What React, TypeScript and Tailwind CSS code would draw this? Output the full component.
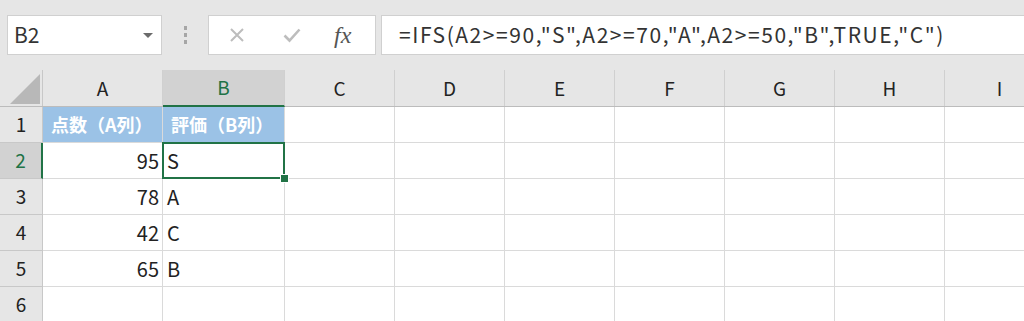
import React from 'react';

const COLS = ['A', 'B', 'C', 'D', 'E', 'F', 'G', 'H', 'I'];
const COL_W = ['w-[120px]', 'w-[122px]', 'w-[110px]', 'w-[110px]', 'w-[110px]', 'w-[110px]', 'w-[110px]', 'w-[110px]', 'w-[110px]'];

const rows: { n: number; a: string; b: string }[] = [
  { n: 1, a: '点数（A列）', b: '評価（B列）' },
  { n: 2, a: '95', b: 'S' },
  { n: 3, a: '78', b: 'A' },
  { n: 4, a: '42', b: 'C' },
  { n: 5, a: '65', b: 'B' },
  { n: 6, a: '', b: '' },
];

const font = "font-['Noto_Sans_CJK_JP',sans-serif]";

const FormulaBar: React.FC = () => (
  <div className="h-[70px] flex items-start pt-[15px] pl-[7px]">
    <div className="w-[155px] h-[40px] bg-white border border-[#d0d0d0] flex items-center justify-between pl-[6px] pr-[8px]">
      <span className="text-[21px] text-[#333]">B2</span>
      <span className="w-0 h-0 border-l-[5px] border-r-[5px] border-t-[5px] border-l-transparent border-r-transparent border-t-[#6b6b6b]" />
    </div>
    <div className="w-[46px] h-[40px] flex flex-col items-center justify-center gap-[3px]">
      <span className="w-[3px] h-[4px] bg-[#a6a6a6]" />
      <span className="w-[3px] h-[4px] bg-[#a6a6a6]" />
      <span className="w-[3px] h-[4px] bg-[#a6a6a6]" />
    </div>
    <div className="w-[168px] h-[40px] bg-white border border-[#d0d0d0] flex items-center">
      <svg className="ml-[20px]" width="16" height="16" viewBox="0 0 16 16">
        <path d="M2 2 L14 14 M14 2 L2 14" stroke="#bdbdbd" strokeWidth="2" />
      </svg>
      <svg className="ml-[38px]" width="18" height="16" viewBox="0 0 18 16">
        <path d="M1.5 8.5 L6.5 13.5 L16.5 2.5" stroke="#bdbdbd" strokeWidth="2.6" fill="none" />
      </svg>
      <span className="ml-[33px] text-[24px] italic text-[#555] font-['Liberation_Serif',serif] leading-none">
        fx
      </span>
    </div>
    <div className="ml-[5px] flex-1 h-[40px] bg-white border border-[#d0d0d0] border-r-0 flex items-center pl-[17px]">
      <span className="text-[21px] text-[#333] tracking-[1.55px]">=IFS(A2&gt;=90,"S",A2&gt;=70,"A",A2&gt;=50,"B",TRUE,"C")</span>
    </div>
  </div>
);

const App: React.FC = () => {
  return (
    <div className={`w-[1024px] h-[321px] overflow-hidden bg-[#e6e6e6] ${font}`}>
      <FormulaBar />
      <div className="w-[1060px]">
        {/* column headers */}
        <div className="flex h-[37px] border-b border-[#bcbcbc]">
          <div className="w-[43px] border-r border-[#c8c8c8] flex items-end justify-end pr-[2px] pb-[2px]">
            <div className="w-0 h-0 border-l-[30px] border-t-[30px] border-l-transparent border-t-transparent border-b-0 border-r-[0px] relative">
              <span className="absolute right-0 bottom-0 w-0 h-0 border-l-[30px] border-b-[30px] border-l-transparent border-b-[#b8b8b8]" />
            </div>
          </div>
          {COLS.map((c, i) => (
            <div
              key={c}
              className={`${COL_W[i]} shrink-0 border-r border-[#d0d0d0] flex items-center justify-center text-[19px] ${
                c === 'B' ? 'bg-[#d2d2d2] text-[#217346] border-b-2 border-b-[#217346] -mb-px' : 'text-[#222]'
              }`}
            >
              {c}
            </div>
          ))}
        </div>
        {rows.map((r) => (
          <div key={r.n} className="flex h-[36px]">
            <div
              className={`w-[43px] shrink-0 border-b border-[#c8c8c8] flex items-center justify-center text-[19px] ${
                r.n === 2
                  ? 'bg-[#d2d2d2] text-[#217346] border-r-2 border-r-[#217346]'
                  : 'text-[#222] border-r border-r-[#c8c8c8]'
              }`}
            >
              {r.n}
            </div>
            {COLS.map((c, i) => {
              const header = r.n === 1 && i < 2;
              const text = i === 0 ? r.a : i === 1 ? r.b : '';
              const selected = r.n === 2 && i === 1;
              return (
                <div
                  key={c}
                  className={`${COL_W[i]} shrink-0 relative border-r border-b border-[#dadada] flex items-center ${
                    header
                      ? 'bg-[#9bc2e6] text-white font-bold text-[18px] pl-[8px] border-[#c9dcee]'
                      : 'bg-white text-[20px] text-[#222]'
                  } ${!header && i === 0 ? 'justify-end pr-[3px]' : ''} ${!header && i === 1 ? 'pl-[4px]' : ''} ${selected ? 'z-10' : ''}`}
                >
                  {text}
                  {selected && (
                    <>
                      <span className="absolute -left-px -top-px -right-px -bottom-px border-2 border-[#217346]" />
                      <span className="absolute -right-[5px] -bottom-[5px] w-[9px] h-[9px] bg-[#217346] border border-white" />
                    </>
                  )}
                </div>
              );
            })}
          </div>
        ))}
      </div>
    </div>
  );
};

export default App;
